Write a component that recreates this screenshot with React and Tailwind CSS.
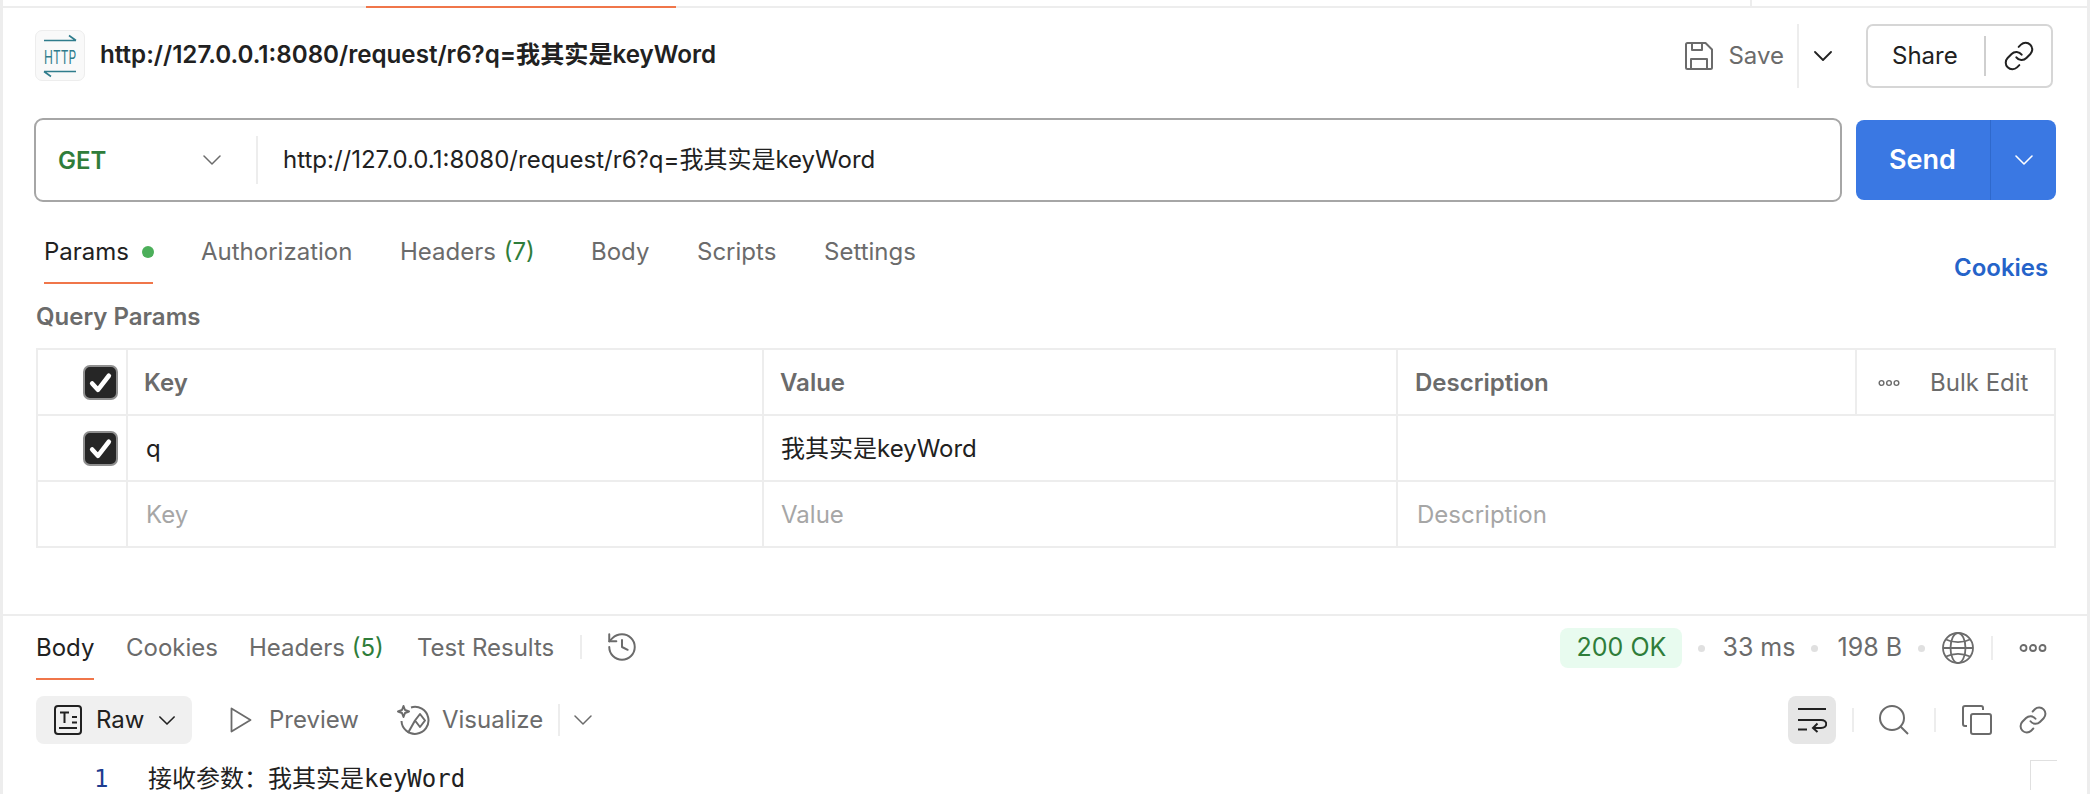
import { History, Link } from 'lucide-react'

const sans = 'font-["Inter","Noto_Sans_CJK_SC",sans-serif]'

function Chevron({ className, strokeWidth = 1.8 }) {
  return (
    <svg viewBox="0 0 18 10" fill="none" stroke="currentColor" strokeWidth={strokeWidth} strokeLinecap="round" strokeLinejoin="round" className={className}>
      <path d="M1 1L9 9L17 1" />
    </svg>
  )
}

function Dots({ className }) {
  return (
    <svg viewBox="0 0 28 10" fill="none" stroke="currentColor" strokeWidth="1.8" className={className}>
      <circle cx="4.5" cy="5" r="3" /><circle cx="14" cy="5" r="3" /><circle cx="23.5" cy="5" r="3" />
    </svg>
  )
}

function CheckBox() {
  return (
    <div className="flex h-[35px] w-[35px] items-center justify-center rounded-[7px] border-2 border-[#8f8f8f] bg-[#262626]">
      <svg viewBox="0 0 24 24" fill="none" stroke="white" strokeWidth="4.4" strokeLinecap="round" strokeLinejoin="round" className="h-[25px] w-[25px]">
        <path d="M4 13 L9.5 19 L20 5.5" />
      </svg>
    </div>
  )
}

function HttpIcon() {
  return (
    <svg viewBox="0 0 36 44" className="h-[44px] w-[36px]" fill="none" stroke="#2f7c8c" strokeWidth="1.6">
      <path d="M2 6.5H34M27 1.5L34 6.5" />
      <text transform="translate(2 30) scale(1 1.55)" fill="#2f7c8c" stroke="none" fontSize="12" fontFamily="Inter">HTTP</text>
      <path d="M2 37.5H34M2 37.5L9 42.5" />
    </svg>
  )
}

function SaveIcon() {
  return (
    <svg viewBox="0 0 28 28" fill="none" stroke="#6b6b6b" strokeWidth="2" strokeLinejoin="round" className="h-[28px] w-[28px]">
      <path d="M1 2.5A1.5 1.5 0 0 1 2.5 1H20.5L27 7.5V25.5A1.5 1.5 0 0 1 25.5 27H2.5A1.5 1.5 0 0 1 1 25.5Z" />
      <path d="M7 1V8H17V1M6 27V17H22V27" />
    </svg>
  )
}

function RawIcon() {
  return (
    <svg viewBox="0 0 28 30" fill="none" stroke="#212121" strokeWidth="2" className="h-[30px] w-[28px]">
      <rect x="1" y="1" width="26" height="28" rx="3" />
      <path d="M6 7.5H15M10.5 7.5V18M5 23H23M18 12H23M18 17.5H23" />
    </svg>
  )
}

function VisualizeIcon() {
  return (
    <svg viewBox="0 0 33 32" fill="none" stroke="#6b6b6b" strokeWidth="2" strokeLinejoin="round" className="h-[32px] w-[33px]">
      <path d="M14 3.5A13.5 13.5 0 1 1 4.5 17" />
      <path d="M6.5 2L8 6L12 7.5L8 9L6.5 13L5 9L1 7.5L5 6Z" />
      <path d="M23 10L28 16.5L23 23L18 16.5Z" />
      <path d="M18 16.5L11 29" />
    </svg>
  )
}

function WrapIcon() {
  return (
    <svg viewBox="0 0 30 26" fill="none" stroke="#212121" strokeWidth="2" className="h-[26px] w-[30px]">
      <path d="M1 2H29M1 13H24C31 13 31 21 24 21H16M20.5 16.5L16 21L20.5 25M1 22.5H10" />
    </svg>
  )
}

function GlobeIcon() {
  return (
    <svg viewBox="0 0 32 32" fill="none" stroke="#6b6b6b" strokeWidth="1.8" className="h-[32px] w-[32px]">
      <circle cx="16" cy="16" r="15" />
      <ellipse cx="16" cy="16" rx="7.5" ry="15" />
      <path d="M4 7.5C11 11 21 11 28 7.5M4 24.5C11 21 21 21 28 24.5M1 16H31" />
    </svg>
  )
}

function SearchIcon() {
  return (
    <svg viewBox="0 0 30 30" fill="none" stroke="#6b6b6b" strokeWidth="2" className="h-[30px] w-[30px]">
      <circle cx="13" cy="13" r="12" />
      <path d="M21.5 21.5L29 29" />
    </svg>
  )
}

function CopyIcon() {
  return (
    <svg viewBox="0 0 30 30" fill="none" stroke="#6b6b6b" strokeWidth="2" strokeLinejoin="round" className="h-[30px] w-[30px]">
      <rect x="9" y="9" width="20" height="20" rx="2" />
      <path d="M5 21H3A2 2 0 0 1 1 19V3A2 2 0 0 1 3 1H19A2 2 0 0 1 21 3V5" />
    </svg>
  )
}

function Row({ children, className = '' }) {
  return <div className={`grid grid-cols-[90px_636px_634px_1fr] ${className}`}>{children}</div>
}

export default function App() {
  return (
    <div className={`${sans} flex h-[794px] w-[2090px] flex-col overflow-hidden border-r-[3px] border-l-[3px] border-[#ededed] bg-white text-[24px] text-[#212121]`}>
      {/* tab strip at the very top */}
      <div className="flex h-[8px] shrink-0 border-b-2 border-[#ededed]">
        <div className="ml-[363px] mt-[6px] h-[2px] w-[310px] bg-[#f0764a]" />
        <div className="ml-[1074px] h-[6px] w-[2px] bg-[#ededed]" />
      </div>

      {/* request title */}
      <div className="flex h-[110px] shrink-0 items-start pl-[32px] pr-[34px] pt-[22px]">
        <div className="flex h-[51px] w-[50px] items-center justify-center rounded-[7px] border border-[#ededed] bg-[#f9f9f9]">
          <HttpIcon />
        </div>
        <div className="ml-[15px] mt-[9px] text-[24.15px] font-semibold leading-[32px]">http://127.0.0.1:8080/request/r6?q=我其实是keyWord</div>
        <div className="-mt-[6px] ml-auto flex h-[64px] items-center text-[#6b6b6b]">
          <SaveIcon />
          <span className="ml-[15px]">Save</span>
          <div className="ml-[13px] h-[64px] w-[2px] bg-[#ededed]" />
          <Chevron className="ml-[15px] h-[10px] w-[18px] text-[#212121]" />
          <div className="ml-[34px] flex h-[64px] w-[187px] items-center rounded-[7px] border-2 border-[#d6d6d6] text-[#212121]">
            <span className="ml-[24px] w-[92px]">Share</span>
            <div className="h-[40px] w-[2px] bg-[#cfcfcf]" />
            <Link className="ml-[17px] h-[32px] w-[32px]" strokeWidth={1.5} />
          </div>
        </div>
      </div>

      {/* url bar */}
      <div className="flex shrink-0 items-center pl-[31px] pr-[31px]">
        <div className="flex h-[84px] w-[1808px] items-center rounded-[9px] border-2 border-[#a6a6a6]">
          <span className="ml-[22px] w-[145px] pt-px font-semibold text-[#2f7d3a]">GET</span>
          <Chevron className="h-[10px] w-[18px] text-[#6b6b6b]" strokeWidth={1.5} />
          <div className="ml-[35px] h-[48px] w-[2px] bg-[#ededed]" />
          <span className="ml-[25px]">http://127.0.0.1:8080/request/r6?q=我其实是keyWord</span>
        </div>
        <div className="ml-[14px] flex h-[80px] w-[200px] items-center rounded-[8px] bg-[#3a78e3] text-white">
          <span className="ml-[33px] w-[101px] text-[27px] font-semibold">Send</span>
          <div className="h-[80px] w-px bg-[#2f69cc]" />
          <Chevron className="ml-[24px] h-[10px] w-[18px]" strokeWidth={1.6} />
        </div>
      </div>

      {/* request tabs */}
      <div className="relative flex h-[98px] shrink-0 items-start pl-[41px] pt-[33px] leading-[34px] text-[#6b6b6b]">
        <div className="relative flex w-[157px] items-center text-[#212121]">
          Params
          <span className="ml-[13px] h-[12px] w-[12px] rounded-full bg-[#4caf5a]" />
          <span className="absolute left-0 top-[47px] h-[2px] w-[109px] bg-[#f0764a]" />
        </div>
        <span className="w-[199px]">Authorization</span>
        <span className="w-[191px]">Headers <span className="ml-px text-[#2f7d3a]">(7)</span></span>
        <span className="w-[106px]">Body</span>
        <span className="w-[127px]">Scripts</span>
        <span>Settings</span>
        <span className="absolute left-[1951px] top-[49px] font-semibold text-[#2563c9]">Cookies</span>
      </div>

      <div className="shrink-0 pl-[33px] font-semibold leading-[34px] text-[#6b6b6b]">Query Params</div>

      {/* params table */}
      <div className="ml-[33px] mt-[14px] w-[2020px] shrink-0 border-2 border-b-0 border-[#ededed]">
        <Row className="h-[66px] items-stretch border-b-2 border-[#ededed] font-semibold text-[#6b6b6b]">
          <div className="flex items-center justify-end border-r-2 border-[#ededed] pr-[8px]"><CheckBox /></div>
          <div className="flex items-center border-r-2 border-[#ededed] pl-[16px] pt-px">Key</div>
          <div className="flex items-center border-r-2 border-[#ededed] pl-[16px] pt-px">Value</div>
          <div className="flex items-center">
            <span className="w-[457px] pl-[17px] pt-px leading-[64px]">Description</span>
            <div className="flex h-full flex-1 items-center border-l-2 border-[#ededed] pl-[21px] font-normal">
              <Dots className="h-[8px] w-[22px]" />
              <span className="ml-[30px]">Bulk Edit</span>
            </div>
          </div>
        </Row>
        <Row className="h-[66px] items-stretch border-b-2 border-[#ededed]">
          <div className="flex items-center justify-end border-r-2 border-[#ededed] pr-[8px]"><CheckBox /></div>
          <div className="flex items-center border-r-2 border-[#ededed] pl-[18px] pt-px">q</div>
          <div className="flex items-center border-r-2 border-[#ededed] pl-[17px] pt-px">我其实是keyWord</div>
          <div />
        </Row>
        <Row className="h-[66px] items-stretch border-b-2 border-[#ededed] text-[#a6a6a6]">
          <div className="border-r-2 border-[#ededed]" />
          <div className="flex items-center border-r-2 border-[#ededed] pl-[18px] pt-px">Key</div>
          <div className="flex items-center border-r-2 border-[#ededed] pl-[17px] pt-px">Value</div>
          <div className="flex items-center pl-[19px] pt-px">Description</div>
        </Row>
      </div>

      {/* response panel */}
      <div className="mt-[66px] flex h-[82px] shrink-0 items-start border-t-2 border-[#ededed] pl-[33px] pr-[40px] pt-[14px]">
        <div className="relative flex h-[34px] items-center leading-[34px] text-[#6b6b6b]">
          <div className="relative w-[90px] pt-px text-[#212121]">
            Body
            <span className="absolute left-0 top-[48px] h-[2px] w-[58px] bg-[#f0764a]" />
          </div>
          <span className="w-[123px] pt-px">Cookies</span>
          <span className="w-[168px] pt-px">Headers <span className="text-[#2f7d3a]">(5)</span></span>
          <span className="w-[163px] pt-px">Test Results</span>
          <div className="h-[24px] w-[2px] bg-[#ededed]" />
          <History className="ml-[23px] h-[34px] w-[34px]" strokeWidth={1.4} />
        </div>
        <div className="-mt-[2px] ml-auto flex h-[40px] items-center text-[25px] text-[#6b6b6b]">
          <span className="flex h-[40px] w-[122px] items-center justify-center rounded-[8px] bg-[#e8fbef] text-[#2f7d3a]">200 OK</span>
          <span className="ml-[16px] h-[7px] w-[7px] rounded-full bg-[#e0e0e0]" />
          <span className="ml-[17px]">33 ms</span>
          <span className="ml-[16px] h-[7px] w-[7px] rounded-full bg-[#e0e0e0]" />
          <span className="ml-[19px]">198 B</span>
          <span className="ml-[16px] h-[7px] w-[7px] rounded-full bg-[#e0e0e0]" />
          <div className="ml-[17px]"><GlobeIcon /></div>
          <div className="ml-[17px] h-[24px] w-[2px] bg-[#ededed]" />
          <Dots className="ml-[26px] h-[10px] w-[28px]" />
        </div>
      </div>

      {/* response toolbar */}
      <div className="flex h-[48px] shrink-0 items-center pl-[33px] pr-[39px] text-[#6b6b6b]">
        <div className="flex h-[48px] w-[156px] items-center rounded-[8px] bg-[#f0f0f0] pl-[18px] text-[#212121]">
          <RawIcon />
          <span className="ml-[14px]">Raw</span>
          <Chevron className="ml-[15px] h-[9px] w-[16px]" />
        </div>
        <svg viewBox="0 0 22 26" fill="none" stroke="#6b6b6b" strokeWidth="1.8" strokeLinejoin="round" className="ml-[38px] h-[26px] w-[22px]">
          <path d="M1.5 1.5L20.5 13L1.5 24.5Z" />
        </svg>
        <span className="ml-[17px]">Preview</span>
        <div className="ml-[38px]"><VisualizeIcon /></div>
        <span className="ml-[12px]">Visualize</span>
        <div className="ml-[15px] h-[32px] w-[2px] bg-[#ededed]" />
        <Chevron className="ml-[14px] h-[10px] w-[18px]" strokeWidth={1.5} />
        <div className="ml-auto flex h-[48px] w-[48px] items-center justify-center rounded-[8px] bg-[#e6e6e6]"><WrapIcon /></div>
        <div className="ml-[16px] h-[24px] w-[2px] bg-[#ededed]" />
        <div className="ml-[25px]"><SearchIcon /></div>
        <div className="ml-[25px] h-[24px] w-[2px] bg-[#ededed]" />
        <div className="ml-[26px]"><CopyIcon /></div>
        <Link className="ml-[26px] h-[30px] w-[30px]" strokeWidth={1.6} />
      </div>

      {/* response body */}
      <div className="relative flex pt-[20px] font-['DejaVu_Sans_Mono','Noto_Sans_CJK_SC',monospace] leading-[30px]">
        <span className="ml-[91px] w-[54px] text-[#1d3c8f]">1</span>
        <span>接收参数：我其实是keyWord</span>
        <div className="absolute left-[2027px] top-[16px] h-[30px] w-[27px] border-l border-t border-[#e0e0e0]" />
      </div>
    </div>
  )
}
